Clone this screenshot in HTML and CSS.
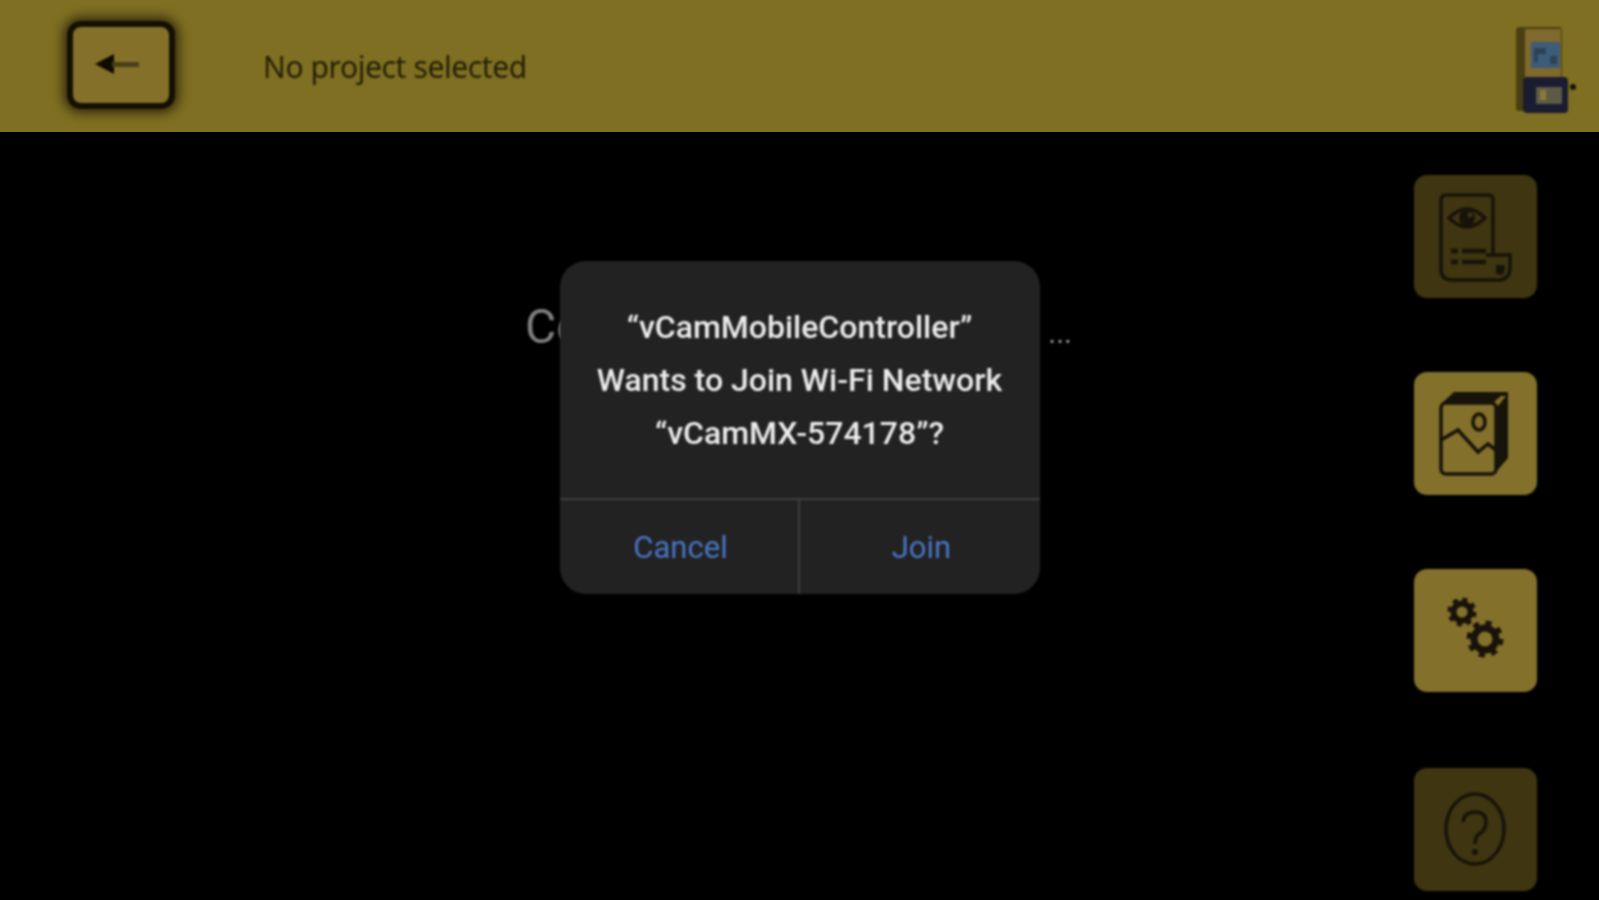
FILE: index.html
```html
<html>
  <head>
    <meta charset="utf-8">
    <link rel="stylesheet" href="styles.css">
    <title>vCam Mobile Controller</title>
  </head>
  <body>
    <div id="screen">
      <div id="topbar">
        <button class="back_btn soft">
          <svg width="44" height="20" viewBox="0 0 44 20">
            <path class="arrow_head" d="M0 10 L19 0 V20 Z"/>
            <rect class="arrow_tail" x="17" y="8" width="27" height="5"/>
          </svg>
        </button>
        <div id="project_name" class="soft">No project selected</div>
        <svg class="device soft" width="60" height="92" viewBox="0 0 60 92">
          <rect class="device_shadow" x="0" y="3" width="46" height="84" rx="3"/>
          <rect class="device_body" x="9" y="5" width="36" height="49"/>
          <rect class="device_screen" x="15" y="18" width="29" height="26"/>
          <path class="device_glare" d="M18 24 H30 V30 H22 V38 H18 Z M34 32 H41 V40 H34 Z"/>
          <rect class="device_base" x="7" y="53" width="45" height="36" rx="4"/>
          <rect class="device_panel" x="20" y="63" width="26" height="17"/>
          <rect class="device_mark" x="24" y="66" width="6" height="10"/>
          <circle class="device_dot" cx="57" cy="63" r="3"/>
        </svg>
      </div>
      <div id="content">
        <div id="status" class="soft">
          <span class="status_text">Connecting to camera</span>
          <span class="status_dots">...</span>
        </div>
        <div id="rail">
          <button class="rail_btn dim soft">
            <svg class="rail_icon" viewBox="0 0 123 123">
              <path d="M79 80 V25 Q79 20 74 20 H32 Q27 20 27 25 V94 Q27 105 38 105 H86 Q96 104 96 92 V80 H72"/>
              <path d="M35 43 Q53 25 71 43 Q53 61 35 43 Z"/>
              <circle class="fill" cx="53" cy="43" r="8"/>
              <circle class="hole" cx="56" cy="40" r="2.5"/>
              <path class="thick" d="M37 76 H44 M48 76 H72 M37 87 H44 M48 87 H72"/>
              <path class="fill" d="M82 90 H91 L90 98 Q86 102 82 98 Z"/>
            </svg>
          </button>
          <button class="rail_btn soft">
            <svg class="rail_icon" viewBox="0 0 123 123">
              <path class="fill" d="M27 32 L40 20 H94 V86 L82 100 V32 Z"/>
              <path class="light" d="M84 34 L92 24 H87 L80 30 Z"/>
              <rect x="27" y="31" width="55" height="71" rx="5"/>
              <path d="M27 68 L44 58 L64 80 L74 72 L82 78"/>
              <ellipse cx="65" cy="50" rx="6" ry="8"/>
            </svg>
          </button>
          <button class="rail_btn soft">
            <svg class="rail_icon" viewBox="0 0 123 123">
              <circle class="ring_small" cx="48" cy="43" r="8.5"/>
              <circle class="teeth_small" cx="48" cy="43" r="12.5"/>
              <circle class="ring_big" cx="71" cy="70" r="11"/>
              <circle class="teeth_big" cx="71" cy="70" r="16"/>
            </svg>
          </button>
          <button class="rail_btn dim last soft">
            <svg class="rail_icon" viewBox="0 0 123 123">
              <ellipse cx="61" cy="61" rx="29" ry="35"/>
              <path d="M49 54 Q50 44 61 44 Q72 44 72 54 Q72 62 65 66 Q61 69 61 76"/>
              <circle class="fill" cx="61" cy="84" r="3"/>
            </svg>
          </button>
        </div>
      </div>
      <div id="overlay">
        <div id="dialog" class="soft">
          <div id="dialog_text">
            <div>“vCamMobileController”</div>
            <div>Wants to Join Wi-Fi Network</div>
            <div>“vCamMX-574178”?</div>
          </div>
          <div id="dialog_actions">
            <button class="dialog_btn">Cancel</button>
            <button class="dialog_btn">Join</button>
          </div>
        </div>
      </div>
    </div>
  </body>
</html>
```

FILE: styles.css
```css
html, body {
  margin:      0;
  height:      100%;
  background:  #000000;
  overflow:    hidden;
  font-family: Roboto,"Liberation Sans",Arial,sans-serif;
}
button {
  padding:     0;
  border:      none;
  font-family: inherit;
}
.soft { filter: blur(0.9px); }
#screen {
  position: relative;
  display:  flex;
  flex-direction: column;
  height:   100%;
}

/* top bar */
#topbar {
  display:     flex;
  align-items: flex-start;
  height:      132px;
  flex:        none;
  background:  #7f6f22;
}
.back_btn {
  display:     flex;
  align-items: center;
  justify-content: center;
  box-sizing:  border-box;
  width:       108px;
  height:      88px;
  margin-top:  21px;
  margin-left: 67px;
  padding-right: 8px;
  padding-bottom: 2px;
  background:  #85702a;
  border:      6px solid #140f02;
  border-radius: 14px;
  box-shadow:  0 0 11px 4px rgba(20, 15, 0, 0.7);
}
.arrow_head { fill: #0e0b02; }
.arrow_tail { fill: #4a3e14; }
#project_name {
  margin-top:  47px;
  margin-left: 88px;
  color:       #241f06;
  font-size:   30px;
  line-height: 40px;
  font-family: "Noto Sans",sans-serif;
  letter-spacing: -0.4px;
}
.device {
  margin-top:  24px;
  margin-left: auto;
  margin-right: 23px;
}
.device_shadow { fill: #4a3f12; }
.device_body   { fill: #80692c; }
.device_screen { fill: #3c5c78; }
.device_glare  { fill: #2c4258; }
.device_base   { fill: #1a1c30; }
.device_panel  { fill: #5c5a45; }
.device_mark   { fill: #8a7c38; }
.device_dot    { fill: #15120a; }

/* main area */
#content {
  display: flex;
  flex:    1;
}
#status {
  display:     flex;
  justify-content: space-between;
  align-items: baseline;
  box-sizing:  border-box;
  width:       547px;
  height:      60px;
  margin-top:  166px;
  margin-left: 525px;
}
.status_text {
  color:       #7f7f7f;
  font-size:   48px;
  white-space: nowrap;
}
.status_dots {
  color:       #9a9a9a;
  font-size:   30px;
}
#rail {
  display:     flex;
  flex-direction: column;
  gap:         74px;
  margin-left: auto;
  margin-right: 62px;
  padding-top: 43px;
}
.rail_btn {
  display:     block;
  width:       123px;
  height:      123px;
  background:  #83702a;
  border-radius: 13px;
}
.rail_btn.dim { background: #3f3510; }
.rail_btn.last { margin-top: 2px; }
.rail_icon {
  display: block;
  width:   123px;
  height:  123px;
  fill:    none;
  stroke:  #17130a;
  stroke-width: 3.5;
}
.rail_icon .fill  { fill: #17130a; stroke: none; }
.rail_icon .hole  { fill: #3f3510; stroke: none; }
.rail_icon .light { fill: #83702a; stroke: none; }
.rail_icon .thick { stroke-width: 4.5; }
.rail_icon .ring_small  { stroke-width: 6; }
.rail_icon .ring_big    { stroke-width: 7; }
.rail_icon .teeth_small { stroke-width: 4; stroke-dasharray: 5 4.82; }
.rail_icon .teeth_big   { stroke-width: 5; stroke-dasharray: 6 6.57; }

/* wifi prompt */
#overlay {
  position: absolute;
  top:      0;
  left:     0;
  right:    0;
  bottom:   0;
  display:  flex;
  align-items: center;
  justify-content: center;
  padding-bottom: 46px;
  box-sizing: border-box;
}
#dialog {
  width:      480px;
  height:     333px;
  display:    flex;
  flex-direction: column;
  background: #222222;
  border-radius: 26px;
}
#dialog_text {
  flex:       1;
  padding-top: 40px;
  color:      #ececec;
  font-size:  32px;
  line-height: 53px;
  text-align: center;
  font-weight: 500;
}
#dialog_actions {
  display:    grid;
  grid-template-columns: 1fr 1fr;
  height:     94px;
  border-top: 2px solid #3d3d3d;
}
.dialog_btn {
  padding-top: 1px;
  padding-left: 4px;
  background: none;
  color:      #4a76c6;
  font-size:  31px;
  font-family: Roboto,sans-serif;
}
.dialog_btn:first-child { border-right: 2px solid #3d3d3d; }
```
